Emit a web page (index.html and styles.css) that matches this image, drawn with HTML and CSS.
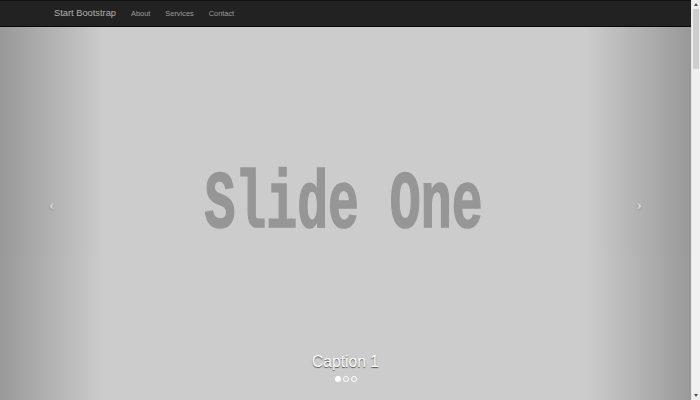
FILE: index.html
```html
<!DOCTYPE html>
<html lang="en">
<head>
<meta charset="utf-8">
<title>Full Slider - Start Bootstrap</title>
<link rel="stylesheet" href="styles.css">
</head>
<body>
<div class="screen">
  <div class="viewport">
    <header class="carousel">
      <div class="slide"><span class="slide-text">Slide One</span></div>
      <a class="control left" href="#"><span class="icon">&#8249;</span></a>
      <a class="control right" href="#"><span class="icon">&#8250;</span></a>
      <div class="caption-stack">
        <h2 class="caption">Caption 1</h2>
        <ol class="indicators">
          <li class="active"></li>
          <li></li>
          <li></li>
        </ol>
      </div>
    </header>
    <nav class="navbar">
      <a class="brand" href="#">Start Bootstrap</a>
      <ul class="nav">
        <li><a href="#">About</a></li>
        <li><a href="#">Services</a></li>
        <li><a href="#">Contact</a></li>
      </ul>
    </nav>
  </div>
  <div class="scrollbar">
    <span class="arrow up"></span>
    <div class="track"><div class="thumb"></div></div>
    <span class="arrow down"></span>
  </div>
</div>
</body>
</html>
```
FILE: styles.css
```css
html, body {
  margin: 0;
  padding: 0;
  height: 100%;
  overflow: hidden;
}
body {
  font-family: "Liberation Sans", Arial, sans-serif;
  background: #fff;
}
.screen {
  display: flex;
  width: 700px;
  height: 400px;
}
.viewport {
  flex: 1;
  position: relative;
  overflow: hidden;
}
.carousel {
  display: grid;
  height: 400px;
  background: #cccccc;
}
.carousel > * {
  grid-area: 1 / 1;
}
.slide {
  display: flex;
  align-items: center;
  justify-content: center;
}
.slide-text {
  display: inline-block;
  font-family: "Liberation Mono", "DejaVu Sans Mono", monospace;
  font-weight: bold;
  font-size: 51.5px;
  letter-spacing: 0;
  color: #969696;
  -webkit-text-stroke: 1.1px #969696;
  transform: scaleY(1.58);
  margin: 10px 4px 0 0;
}
.control {
  position: absolute;
  top: 0;
  bottom: 0;
  width: 15%;
  opacity: 0.5;
  color: #fff;
  text-decoration: none;
  text-shadow: 0 1px 2px rgba(0,0,0,.6);
  display: flex;
  align-items: center;
  justify-content: center;
}
.control.left {
  left: 0;
  background-image: linear-gradient(to right, rgba(0,0,0,.5) 0, rgba(0,0,0,.0001) 100%);
}
.control.right {
  right: 0;
  background-image: linear-gradient(to right, rgba(0,0,0,.0001) 0, rgba(0,0,0,.5) 100%);
}
.icon {
  font-family: "Liberation Serif", serif;
  font-size: 15px;
  line-height: 1;
  margin-top: 10px;
}
.caption-stack {
  align-self: end;
  display: flex;
  flex-direction: column;
  align-items: center;
  padding-bottom: 18px;
}
.caption {
  margin: 0;
  font-weight: normal;
  font-size: 15.6px;
  line-height: 17.4px;
  color: #fff;
  text-shadow: 0 1px 1px rgba(0,0,0,.6);
}
.indicators {
  list-style: none;
  margin: 6px 0 0;
  padding: 0;
  display: flex;
  align-items: center;
  gap: 2px;
}
.indicators li {
  width: 4px;
  height: 4px;
  border: 1px solid #fff;
  border-radius: 50%;
}
.indicators li.active {
  width: 6px;
  height: 6px;
  border: 0;
  background: #fff;
}
.navbar {
  position: absolute;
  top: 0;
  left: 0;
  right: 0;
  height: 27px;
  background: #222;
  border-top: 1px solid #111;
  border-bottom: 1px solid #080808;
  display: flex;
  align-items: center;
  padding: 0 0 0 54px;
  box-sizing: border-box;
  line-height: 1;
}
.brand {
  color: #b0b0b0;
  text-decoration: none;
  font-size: 9.3px;
}
.nav {
  list-style: none;
  margin: 0 0 0 15px;
  padding: 0;
  display: flex;
  align-items: center;
  gap: 15px;
  font-size: 7.4px;
  line-height: 1;
}
.nav a {
  color: #9d9d9d;
  text-decoration: none;
  display: block;
}
.scrollbar {
  width: 9px;
  display: flex;
  flex-direction: column;
  background: #f0f0f0;
  border-left: 1px solid #e6e6e6;
  box-sizing: border-box;
}
.arrow {
  height: 9px;
  display: flex;
  align-items: center;
  justify-content: center;
}
.arrow::before {
  content: "";
  border-left: 2.5px solid transparent;
  border-right: 2.5px solid transparent;
}
.arrow.up::before {
  border-bottom: 3px solid #505050;
}
.arrow.down::before {
  border-top: 3px solid #505050;
}
.track {
  flex: 1;
  padding: 0 1px;
}
.thumb {
  height: 60px;
  background: #cdcdcd;
}
```
